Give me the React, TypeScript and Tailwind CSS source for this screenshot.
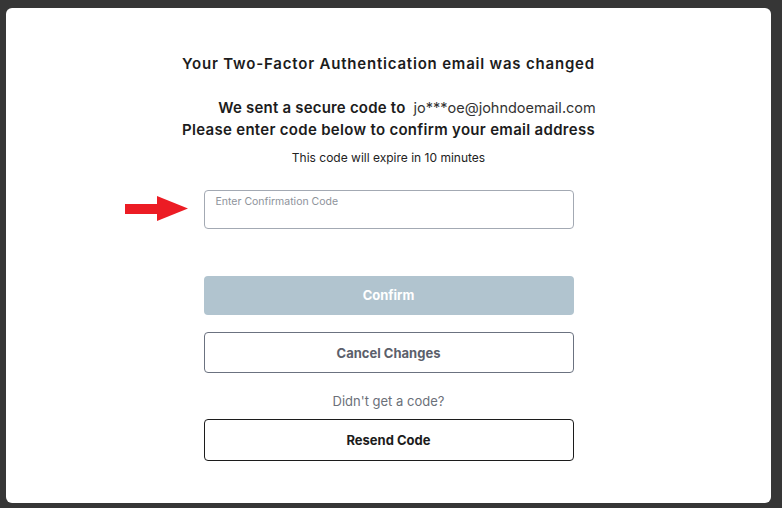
import React from "react";

export default function App() {
  return (
    <div
      className="w-[782px] h-[508px] bg-[#363636] pl-[6px] pt-[8px] pr-[11px] pb-[5px]"
      style={{ fontFamily: "Inter, 'Noto Sans', sans-serif" }}
    >
      <div className="w-full h-full bg-white rounded-[6px] flex flex-col items-center pt-[46px]">
        <h1 className="text-[15px] leading-[20px] font-semibold tracking-[0.8px] text-[#1c1c1c]">
          Your Two-Factor Authentication email was changed
        </h1>
        <p className="mt-[23px] pl-[37px] text-[15px] leading-[22px] font-semibold text-[#1c1c1c] flex items-baseline">
          <span className="tracking-[0.2px]">We sent a secure code to</span>
          <span className="ml-[8px] text-[14.5px] font-normal text-[#333]">jo***oe@johndoemail.com</span>
        </p>
        <p className="text-[15px] leading-[22px] font-semibold tracking-[0.3px] text-[#1c1c1c]">
          Please enter code below to confirm your email address
        </p>
        <p className="mt-[9px] text-[12px] leading-[16px] text-[#222]">
          This code will expire in 10 minutes
        </p>

        <div className="relative mt-[24px] w-[370px]">
          <svg
            className="absolute left-[-79px] top-[6px]"
            width="63"
            height="25"
            viewBox="0 0 63 25"
          >
            <rect x="0" y="8" width="33" height="10" fill="#ec1c24" />
            <polygon points="32,0 63,12.5 32,25" fill="#ec1c24" />
          </svg>
          <div className="h-[39px] w-full border border-[#a3a9b3] rounded-[4px] px-[11px] pt-[4px]">
            <span className="block text-[10.5px] leading-[13px] text-[#8e939b]">
              Enter Confirmation Code
            </span>
          </div>
        </div>

        <button className="mt-[47px] w-[370px] h-[39px] rounded-[4px] bg-[#b1c4cf] text-white text-[13px] font-bold">
          Confirm
        </button>
        <button className="mt-[17px] w-[370px] h-[41px] rounded-[4px] border border-[#6b7280] bg-white text-[#5b606b] text-[13px] font-bold pt-[2px]">
          Cancel Changes
        </button>
        <p className="mt-[19px] text-[13px] leading-[18px] text-[#6b7079]">Didn't get a code?</p>
        <button className="mt-[9px] w-[370px] h-[42px] rounded-[4px] border border-[#1c1c1c] bg-white text-[#1c1c1c] text-[13px] font-bold pt-[2px]">
          Resend Code
        </button>
      </div>
    </div>
  );
}
